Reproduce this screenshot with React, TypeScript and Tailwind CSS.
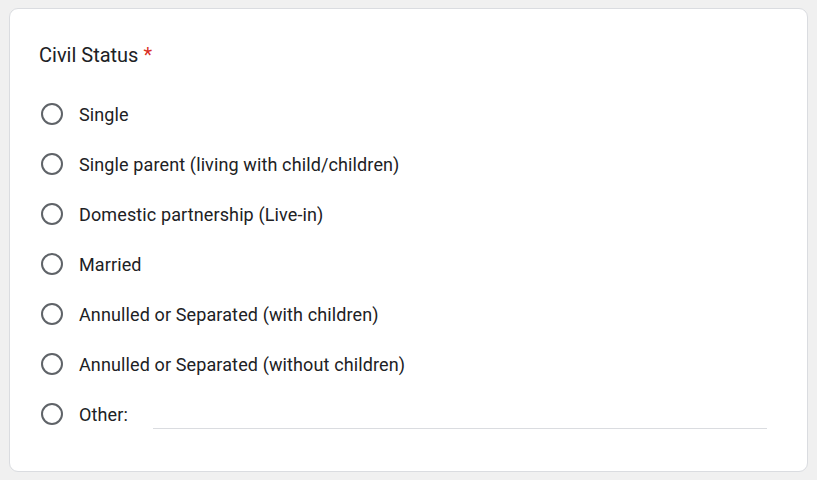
const options = [
  "Single",
  "Single parent (living with child/children)",
  "Domestic partnership (Live-in)",
  "Married",
  "Annulled or Separated (with children)",
  "Annulled or Separated (without children)",
]

function Radio() {
  return <span className="block w-[22px] h-[22px] rounded-full border-2 border-[#5f6368] shrink-0" />
}

export default function App() {
  return (
    <div className="min-h-screen bg-[#f0f0f0] pt-[8px] pl-[9px] pr-[9px]" style={{ fontFamily: "Roboto, Arial, sans-serif" }}>
      <div className="bg-white border border-[#dadce0] rounded-[9px] h-[464px] pl-[29px] pr-[40px] pt-[32px]">
        <div className="text-[20px] text-[#202124] leading-[28px]">
          Civil Status <span className="text-[#d93025]">*</span>
        </div>
        <div className="mt-[20px] flex flex-col">
          {options.map((o) => (
            <div key={o} className="flex items-center h-[50px] pl-[2px]">
              <Radio />
              <span className="ml-[16px] text-[18px] tracking-[0.12px] text-[#202124]">{o}</span>
            </div>
          ))}
          <div className="flex items-center h-[50px] pl-[2px]">
            <Radio />
            <span className="ml-[16px] text-[18px] tracking-[0.12px] text-[#202124]">Other:</span>
            <div className="ml-[25px] flex-1 self-end mb-[10px] border-b border-[#dadce0]" />
          </div>
        </div>
      </div>
    </div>
  )
}
